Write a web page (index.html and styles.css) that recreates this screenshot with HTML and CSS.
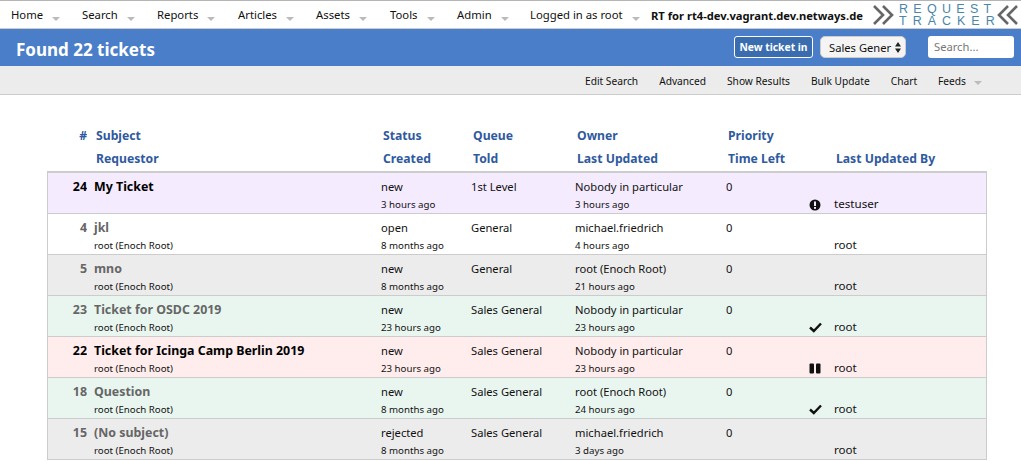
FILE: index.html
```html
<!DOCTYPE html>
<html>
  <head>
    <meta charset="UTF-8" />
    <title>Found 22 tickets</title>
    <link rel="stylesheet" href="styles.css">
  </head>
  <body>
    <div class="topbar">
      <ul class="menu">
        <li class="menu-home">Home<span class="arrow"></span></li>
        <li class="menu-search">Search<span class="arrow"></span></li>
        <li class="menu-reports">Reports<span class="arrow"></span></li>
        <li class="menu-articles">Articles<span class="arrow"></span></li>
        <li class="menu-assets">Assets<span class="arrow"></span></li>
        <li class="menu-tools">Tools<span class="arrow"></span></li>
        <li class="menu-admin">Admin<span class="arrow"></span></li>
        <li class="menu-user">Logged in as root<span class="arrow"></span></li>
      </ul>
      <div class="rtname">RT for rt4-dev.vagrant.dev.netways.de</div>
      <div class="logo">
        <svg class="logo-left" width="22" height="20" viewBox="0 0 22 20">
          <path d="M1 1 L10 10 L1 19 M10 1 L19 10 L10 19" fill="none" stroke="#666" stroke-width="2.6"/>
        </svg>
        <div class="logo-text">
          <span>REQUEST</span>
          <span class="logo-tracker">TRACKER</span>
        </div>
        <svg width="24" height="20" viewBox="0 0 24 20">
          <path d="M11 1 L2 10 L11 19 M20 1 L11 10 L20 19" fill="none" stroke="#666" stroke-width="2.6"/>
        </svg>
      </div>
    </div>
    <div class="titlebar">
      <h1>Found 22 tickets</h1>
      <div class="create">
        <button class="btn-new">New ticket in</button>
        <div class="queue-select"><span>Sales Gener</span>
          <svg width="6" height="11" viewBox="0 0 6 11"><path d="M3 0 L6 4.5 L0 4.5 Z M3 11 L6 6.5 L0 6.5 Z" fill="#222"/></svg>
        </div>
      </div>
      <div class="search-box">Search...</div>
    </div>
    <ul class="pagemenu">
      <li>Edit Search</li>
      <li>Advanced</li>
      <li>Show Results</li>
      <li>Bulk Update</li>
      <li>Chart</li>
      <li>Feeds<span class="arrow"></span></li>
    </ul>
    <table class="tickets">
      <colgroup>
        <col class="c-id"><col class="c-subject"><col class="c-status"><col class="c-queue"><col class="c-owner"><col class="c-priority"><col class="c-icon"><col class="c-updater">
      </colgroup>
      <thead>
        <tr><th class="num">#</th><th>Subject</th><th>Status</th><th>Queue</th><th>Owner</th><th>Priority</th><th></th><th></th></tr>
        <tr><th></th><th>Requestor</th><th>Created</th><th>Told</th><th>Last Updated</th><th>Time Left</th><th></th><th>Last Updated By</th></tr>
      </thead>
      <tbody class="purple unread">
        <tr class="line1"><td class="num">24</td><td class="subject">My Ticket</td><td>new</td><td>1st Level</td><td>Nobody in particular</td><td>0</td><td></td><td></td></tr>
        <tr class="line2"><td></td><td></td><td>3 hours ago</td><td></td><td>3 hours ago</td><td></td><td class="icon"><svg width="12" height="12" viewBox="0 0 12 12"><circle cx="6" cy="6" r="5.5" fill="#111"/><rect x="5" y="2.5" width="2" height="4.5" fill="#f5ebff"/><rect x="5" y="8" width="2" height="1.8" fill="#f5ebff"/></svg></td><td class="big">testuser</td></tr>
      </tbody>
      <tbody class="white">
        <tr class="line1"><td class="num">4</td><td class="subject">jkl</td><td>open</td><td>General</td><td>michael.friedrich</td><td>0</td><td></td><td></td></tr>
        <tr class="line2"><td></td><td>root (Enoch Root)</td><td>8 months ago</td><td></td><td>4 hours ago</td><td></td><td></td><td class="big">root</td></tr>
      </tbody>
      <tbody class="grey">
        <tr class="line1"><td class="num">5</td><td class="subject">mno</td><td>new</td><td>General</td><td>root (Enoch Root)</td><td>0</td><td></td><td></td></tr>
        <tr class="line2"><td></td><td>root (Enoch Root)</td><td>8 months ago</td><td></td><td>21 hours ago</td><td></td><td></td><td class="big">root</td></tr>
      </tbody>
      <tbody class="green">
        <tr class="line1"><td class="num">23</td><td class="subject">Ticket for OSDC 2019</td><td>new</td><td>Sales General</td><td>Nobody in particular</td><td>0</td><td></td><td></td></tr>
        <tr class="line2"><td></td><td>root (Enoch Root)</td><td>23 hours ago</td><td></td><td>23 hours ago</td><td></td><td class="icon"><svg width="13" height="11" viewBox="0 0 13 11"><path d="M1 5.5 L4.8 9 L12 1.5" fill="none" stroke="#111" stroke-width="2.4"/></svg></td><td class="big">root</td></tr>
      </tbody>
      <tbody class="red unread">
        <tr class="line1"><td class="num">22</td><td class="subject">Ticket for Icinga Camp Berlin 2019</td><td>new</td><td>Sales General</td><td>Nobody in particular</td><td>0</td><td></td><td></td></tr>
        <tr class="line2"><td></td><td>root (Enoch Root)</td><td>23 hours ago</td><td></td><td>23 hours ago</td><td></td><td class="icon"><svg width="12" height="11" viewBox="0 0 12 11"><rect x="0.5" y="0.5" width="4.5" height="10" rx="1" fill="#111"/><rect x="7" y="0.5" width="4.5" height="10" rx="1" fill="#111"/></svg></td><td class="big">root</td></tr>
      </tbody>
      <tbody class="green">
        <tr class="line1"><td class="num">18</td><td class="subject">Question</td><td>new</td><td>Sales General</td><td>root (Enoch Root)</td><td>0</td><td></td><td></td></tr>
        <tr class="line2"><td></td><td>root (Enoch Root)</td><td>8 months ago</td><td></td><td>24 hours ago</td><td></td><td class="icon"><svg width="13" height="11" viewBox="0 0 13 11"><path d="M1 5.5 L4.8 9 L12 1.5" fill="none" stroke="#111" stroke-width="2.4"/></svg></td><td class="big">root</td></tr>
      </tbody>
      <tbody class="grey">
        <tr class="line1"><td class="num">15</td><td class="subject">(No subject)</td><td>rejected</td><td>Sales General</td><td>michael.friedrich</td><td>0</td><td></td><td></td></tr>
        <tr class="line2"><td></td><td>root (Enoch Root)</td><td>8 months ago</td><td></td><td>3 days ago</td><td></td><td></td><td class="big">root</td></tr>
      </tbody>
    </table>
  </body>
</html>
```

FILE: styles.css
```css
html {
  height: 461px;
  overflow: hidden;
}
body {
  margin: 0;
  background-color: #ffffff;
  font-family: "Noto Sans", Arial, sans-serif;
  font-size: 11.2px;
  color: #111111;
}
ul {
  list-style: none;
  margin: 0;
  padding: 0;
}
.arrow {
  display: inline-block;
  width: 0;
  height: 0;
  border-left: 4.5px solid transparent;
  border-right: 4.5px solid transparent;
  border-top: 4px solid #bbbbbb;
  vertical-align: -2px;
  margin-left: 9px;
}

.topbar {
  display: flex;
  align-items: center;
  height: 27px;
  border-top: 1px solid #b5b5b5;
  border-bottom: 1px solid #cccccc;
}
.menu {
  display: flex;
  flex: none;
  padding-left: 11px;
  width: 640px;
  box-sizing: border-box;
  font-size: 11.3px;
}
.menu li { flex: none; white-space: nowrap; }
.menu-home { width: 71px; }
.menu-search { width: 75px; }
.menu-reports { width: 81px; }
.menu-articles { width: 78px; }
.menu-assets { width: 74px; }
.menu-tools { width: 67px; }
.menu-admin { width: 73px; }
.rtname {
  flex: none;
  font-weight: bold;
  white-space: nowrap;
  font-size: 11.2px;
  margin-left: 11px;
  width: 222px;
  padding-top: 2px;
}
.logo {
  display: flex;
  flex: none;
  align-items: center;
  color: #4a86a8;
}
.logo-left { margin-right: 4px; }
.logo-text {
  display: flex;
  flex-direction: column;
  font-family: "Liberation Sans", Arial, sans-serif;
  font-size: 12.5px;
  line-height: 12px;
  letter-spacing: 5.3px;
  width: 98px;
}
.logo-tracker { letter-spacing: 6px; }

.titlebar {
  display: flex;
  align-items: center;
  box-sizing: border-box;
  height: 37px;
  background-color: #4a7ec8;
  color: #ffffff;
  padding: 0 7px 1px 16px;
}
h1 {
  margin: 0;
  padding-top: 4px;
  font-size: 17px;
  font-weight: bold;
  flex: 1;
}
.create {
  display: flex;
  align-items: center;
  gap: 7px;
  margin-right: 22px;
}
.btn-new {
  font: bold 10.3px "Noto Sans", Arial, sans-serif;
  color: #ffffff;
  background-color: #3a6cb0;
  border: 1px solid #ffffff;
  border-radius: 3px;
  width: 79px;
  height: 22px;
  padding: 0;
  white-space: nowrap;
}
.queue-select {
  display: flex;
  align-items: center;
  justify-content: space-between;
  box-sizing: border-box;
  width: 86px;
  height: 22px;
  padding: 0 4px 0 8px;
  background-color: #f4f4f4;
  color: #111111;
  border: 1px solid #cccccc;
  border-radius: 5px;
  white-space: nowrap;
}
.search-box {
  box-sizing: border-box;
  width: 86px;
  height: 22px;
  line-height: 22px;
  padding-left: 6px;
  background-color: #ffffff;
  color: #777777;
  border-radius: 3px;
}

.pagemenu {
  display: flex;
  justify-content: flex-end;
  gap: 21px;
  height: 28px;
  line-height: 30px;
  padding-right: 39px;
  background-color: #ececec;
  border-bottom: 1px solid #cccccc;
  font-size: 10.2px;
}
.pagemenu .arrow {
  margin-left: 8px;
  vertical-align: 0;
}

.tickets {
  border-collapse: separate;
  border-spacing: 0;
  table-layout: fixed;
  width: 940px;
  margin: 29px 0 0 47px;
  line-height: 16px;
}
.c-id { width: 40px; }
.c-subject { width: 287px; }
.c-status { width: 90px; }
.c-queue { width: 104px; }
.c-owner { width: 151px; }
.c-priority { width: 84px; }
.c-icon { width: 24px; }
.tickets th,
.tickets td {
  padding: 0 0 0 7px;
  text-align: left;
  white-space: nowrap;
  overflow: hidden;
}
.tickets th {
  color: #2f5a9e;
  font-size: 12.2px;
  font-weight: bold;
  height: 23px;
  padding-left: 9px;
}
.tickets th.num {
  text-align: right;
  padding: 0;
}
.tickets thead tr:last-child th {
  height: 24px;
  border-bottom: 2px solid #cccccc;
}
.tickets td:first-child { border-left: 1px solid #cccccc; }
.tickets td:last-child { border-right: 1px solid #cccccc; }
.line1 td { height: 23px; padding-top: 4px; box-sizing: border-box; }
.line2 td {
  height: 18px;
  box-sizing: border-box;
  font-size: 9.7px;
  border-bottom: 1px solid #cccccc;
}
.tickets .line2 td.big { font-size: 11.6px; line-height: 14px; padding-bottom: 2px; }
.line2 td.icon { padding: 0; }
.icon svg { display: block; margin: 0 auto; }
.tickets td.num {
  text-align: right;
  padding: 4px 0 0;
}
.tickets td.subject,
.tickets td.num { font-weight: bold; font-size: 12.4px; color: #666666; }
.tickets .unread td.num,
.tickets .unread td.subject { color: #000000; }
.purple { background-color: #f5ebff; }
.white { background-color: #ffffff; }
.grey { background-color: #ececec; }
.green { background-color: #e9f6f0; }
.red { background-color: #ffecec; }
```
